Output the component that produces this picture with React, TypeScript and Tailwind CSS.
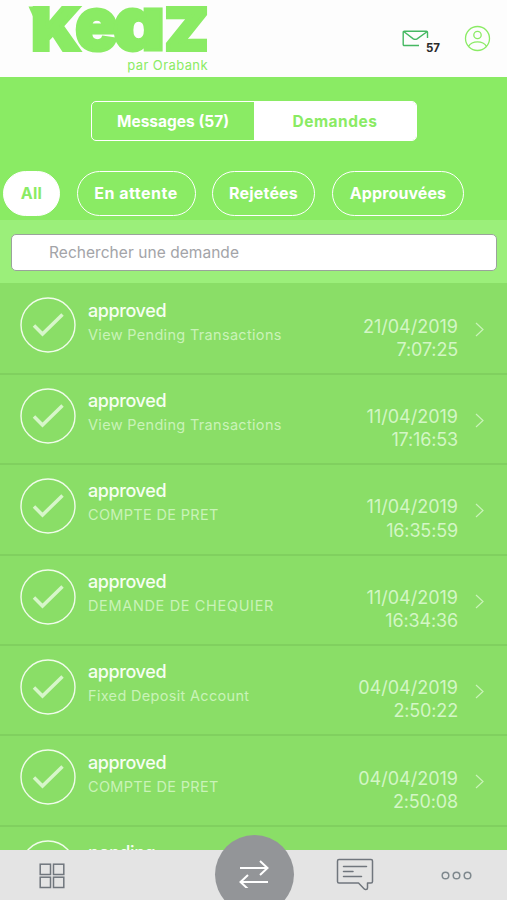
import clsx from "clsx";

const filters = [
  { label: "All", className: "w-[57px] bg-white text-[#8aeb64]", text: "tracking-[0.3px]" },
  { label: "En attente", className: "ml-[16.5px] w-[119px]", text: "tracking-[0.5px]" },
  { label: "Rejetées", className: "ml-[16.5px] w-[103px]", text: "tracking-[0.2px]" },
  { label: "Approuvées", className: "ml-[17px] w-[132px]", text: "tracking-[0.1px]" },
];

const requests = [
  { status: "approved", title: "View Pending Transactions", date: "21/04/2019", time: "7:07:25" },
  { status: "approved", title: "View Pending Transactions", date: "11/04/2019", time: "17:16:53" },
  { status: "approved", title: "COMPTE DE PRET", date: "11/04/2019", time: "16:35:59" },
  { status: "approved", title: "DEMANDE DE CHEQUIER", date: "11/04/2019", time: "16:34:36" },
  { status: "approved", title: "Fixed Deposit Account", date: "04/04/2019", time: "2:50:22" },
  { status: "approved", title: "COMPTE DE PRET", date: "04/04/2019", time: "2:50:08" },
  { status: "pending", title: "COMPTE DE PRET", date: "04/04/2019", time: "2:48:51" },
];

const Logo = () => (
  <svg
    width="182"
    height="50"
    viewBox="0 0 182 50"
    className="overflow-visible text-[#8aeb64]"
    fill="currentColor"
    stroke="currentColor"
    fontFamily="Inter, sans-serif"
    fontWeight="900"
    style={{ fontFeatureSettings: '"cv11"' }}
  >
    {/* small spur on the top left corner */}
    <path d="M2.500 0.500h10v10h-5.500z" stroke="none" />
    <text x="6" y="43.500" fontSize="57.500" strokeWidth="4" textLength="48" lengthAdjust="spacingAndGlyphs">K</text>
    <text x="49" y="43.500" fontSize="75" strokeWidth="3" textLength="43" lengthAdjust="spacingAndGlyphs">e</text>
    <text x="87" y="43.500" fontSize="75" strokeWidth="3" textLength="52" lengthAdjust="spacingAndGlyphs">a</text>
    <text x="139" y="43.500" fontSize="57.500" strokeWidth="4" textLength="43" lengthAdjust="spacingAndGlyphs">Z</text>
  </svg>
);

const Header = () => (
  <header className="flex h-[77px] shrink-0 items-start justify-between bg-[#fdfdfd]">
    <div className="ml-[26px] mt-[6px] flex w-[182px] flex-col items-end">
      <Logo />
      <span className="text-[13px] leading-[18px] tracking-[0.4px] text-[#8aeb64]">par Orabank</span>
    </div>
    <div className="mr-[16px] mt-[25px] flex items-start">
      <svg width="27" height="18" viewBox="0 0 27 18" fill="none" stroke="#45b862" strokeWidth="1.4" className="mt-[5px]">
        <path d="M17 15.5H2.2a1 1 0 0 1-1-1V2.2a1 1 0 0 1 1-1h22.3a1 1 0 0 1 1 1V8" />
        <path d="M2 1.8l9.3 7q1.900 1.200 3.800 0L25 1.800" />
      </svg>
      <span className="-ml-[3px] mt-[15px] w-[15px] text-[11.500px] font-bold leading-[16px] tracking-[-0.2px] text-[#2a2a2a]">57</span>
      <svg width="27" height="27" viewBox="0 0 27 27" fill="none" stroke="#8aeb64" strokeWidth="1.3" className="ml-[23px]">
        <circle cx="13.5" cy="13.5" r="12" />
        <circle cx="13.5" cy="10" r="3.7" />
        <path d="M4.500 21.300C6.500 18 10 16.800 13.500 16.800S20.500 18 22.500 21.300" />
      </svg>
    </div>
  </header>
);

const RequestRow = ({ item }: { item: (typeof requests)[number] }) => (
  <li className="flex h-[90.4px] shrink-0 items-start border-b-2 border-[#80d05f] pl-[20px]">
    <svg width="56" height="56" viewBox="0 0 56 56" fill="none" className="mt-[13px] shrink-0">
      <circle cx="28" cy="28" r="27" stroke="#f0fcea" strokeWidth="1.4" />
      <path d="M14 28.500L22.500 37L42.500 17.500" stroke="#d7f6ca" strokeWidth="3.500" />
    </svg>
    <div className="ml-[12px] mt-[14.200px] grow">
      <p className="text-[18px] font-medium leading-[24px] tracking-[-0.4px] text-[#f6fef2]">{item.status}</p>
      <p
        className={clsx(
          "text-[14.500px] leading-[24px] text-[#c9f3b8]",
          item.title.startsWith("DEMANDE") ? "tracking-[0.650px]" : "tracking-[0.320px]"
        )}
      >
        {item.title}
      </p>
    </div>
    <div className="mt-[30.200px] text-right text-[18px] leading-[23.3px] text-[#d3f6c5]">
      <p>{item.date}</p>
      <p className="tracking-[-0.150px]">{item.time}</p>
    </div>
    <svg width="9" height="15" viewBox="0 0 9 15" fill="none" stroke="#c9f3b8" strokeWidth="1.200" className="ml-[17px] mr-[23px] mt-[38px] shrink-0">
      <path d="M1 1l7 6.500-7 6.500" />
    </svg>
  </li>
);

const BottomNav = () => (
  <nav className="relative flex h-[50px] shrink-0 bg-[#e4e4e4] text-[#70767d]">
    <svg width="26" height="26" viewBox="0 0 26 26" fill="none" stroke="currentColor" strokeWidth="1.5" className="ml-[39px] mt-[13px]">
      <rect x="1.200" y="1.200" width="10.300" height="10.300" />
      <rect x="14.500" y="1.200" width="10.300" height="10.300" />
      <rect x="1.200" y="14.200" width="10.300" height="10.300" />
      <rect x="14.500" y="14.200" width="10.300" height="10.300" />
    </svg>
    <button className="absolute left-[214.500px] top-[-15px] flex h-[79px] w-[79px] items-center justify-center rounded-full bg-[#939598]">
      <svg width="32" height="28" viewBox="0 0 32 28" fill="none" stroke="#fff" strokeWidth="2" className="-mt-px">
        <path d="M2 8h27M22 1l7.500 7-7.500 7" />
        <path d="M30 22H3M10 15l-7.500 7 7.500 7" />
      </svg>
    </button>
    <svg width="38" height="33" viewBox="0 0 38 33" fill="none" stroke="currentColor" strokeWidth="1.5" strokeLinejoin="round" strokeLinecap="round" className="ml-[271px] mt-[8px]">
      <path d="M3 1.500h32q1.500 0 1.500 1.500v20.500q0 1.500-1.500 1.500h-3.500v5q0 1.500-1.500 1.500h-.500q-.700 0-1.200-.500L22.500 25H3q-1.500 0-1.500-1.500V3q0-1.500 1.500-1.500z" />
      <path d="M7.500 8.500h23M7.500 13.500h9.500M7.500 18.500h18" />
    </svg>
    <svg width="31" height="9" viewBox="0 0 31 9" fill="none" stroke="#7f898e" strokeWidth="1.500" className="ml-[67px] mt-[21px]">
      <circle cx="4.500" cy="4.500" r="3.300" />
      <circle cx="15.500" cy="4.500" r="3.300" />
      <circle cx="26.500" cy="4.500" r="3.300" />
    </svg>
  </nav>
);

export default function App() {
  return (
    <div className="flex h-[900px] w-[507px] flex-col overflow-hidden bg-[#8aeb64] font-['Inter',sans-serif]">
      <Header />
      <section className="flex h-[143px] shrink-0 flex-col">
        <div className="ml-[91px] mt-[24px] flex h-[40px] w-[326px] overflow-hidden rounded-[5px] border border-white text-[15.500px] font-bold">
          <button className="w-1/2 pt-[2px] text-white">Messages (57)</button>
          <button className="w-1/2 bg-white pt-[2px] tracking-[0.500px] text-[#8aeb64]">Demandes</button>
        </div>
        <div className="ml-[3px] mt-[30px] flex h-[44.500px] text-[16px] font-bold text-white">
          {filters.map((f) => (
            <button
              key={f.label}
              className={clsx("shrink-0 rounded-full border-[1.500px] border-white", f.className, f.text)}
            >
              {f.label}
            </button>
          ))}
        </div>
      </section>
      <div className="h-[63px] shrink-0 bg-[#9bef7a] pl-[11px] pr-[10px] pt-[14px]">
        <input
          className="h-[37px] w-full rounded-[5px] border-[1.500px] border-[#9aa39b] bg-white pl-[37px] text-[15.500px] tracking-[0.050px] placeholder:text-[#a3a4a8]"
          placeholder="Rechercher une demande"
        />
      </div>
      <ul className="flex min-h-0 grow flex-col overflow-hidden bg-[#8ade67] pt-[1.400px]">
        {requests.map((r, i) => (
          <RequestRow key={i} item={r} />
        ))}
      </ul>
      <BottomNav />
    </div>
  );
}
